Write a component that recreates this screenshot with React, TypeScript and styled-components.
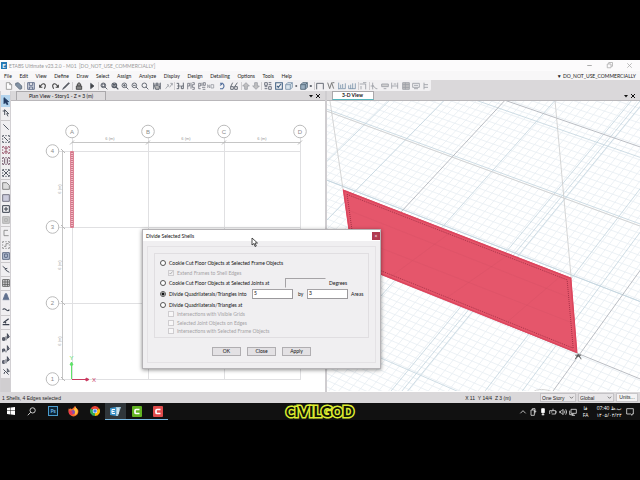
import React from 'react';
import styled, { createGlobalStyle } from 'styled-components';

const GlobalStyle = createGlobalStyle`
  * { box-sizing: border-box; }
  body { margin: 0; background: #000; font-family: Lato, "Open Sans", sans-serif; font-size: 5px; line-height: 8px; color: #222; }
  button, input, select { font: inherit; color: inherit; margin: 0; padding: 0; border: 0; background: none; border-radius: 0; }
  svg { display: block; }
`;

const Screen = styled.div`
  display: flex;
  flex-direction: column;
  min-height: 100vh;
  padding: 60px 0;
`;
const AppWindow = styled.main`
  position: relative;
  flex: 1;
  display: flex;
  flex-direction: column;
  background: #dad8da;
`;
const TitleBar = styled.header`
  display: flex;
  align-items: center;
  height: 11px;
  padding-left: 1px;
  gap: 2px;
  background: #fcfbfc;
  color: #999;
`;
const Logo = styled.span`
  width: 6px;
  height: 7px;
  background: #2779b4;
  color: #fff;
  font-weight: 700;
  font-size: 6px;
  line-height: 7px;
  text-align: center;
`;
const WindowButtons = styled.div`
  display: flex;
  gap: 11px;
  margin-left: auto;
  padding-right: 6px;
`;
const WindowButton = styled.button`
  width: 9px;
  height: 9px;
  color: #999;
`;
const MenuBar = styled.nav`
  display: flex;
  align-items: center;
  justify-content: space-between;
  height: 9px;
  padding: 0 4px;
  background: #f8f7f8;
`;
const MenuGroup = styled.div`
  display: flex;
  justify-content: space-between;
  width: 288px;
`;
const MenuItem = styled.button`
  white-space: nowrap;
`;
const ToolBar = styled.div`
  display: flex;
  align-items: center;
  align-self: flex-start;
  height: 11px;
  width: 431px;
  padding-left: 4px;
  background: #f1f0f2;
  border-radius: 0 0 2px 0;
`;
const ToolButton = styled.button<{ $w: number; $faint?: boolean }>`
  display: flex;
  justify-content: center;
  flex: none;
  width: ${p => p.$w}px;
  opacity: ${p => (p.$faint ? 0.45 : 0.85)};
`;
const ToolRule = styled.span`
  width: 1px;
  height: 8px;
  background: #cfcdd0;
`;
const Work = styled.div`
  flex: 1;
  display: flex;
  min-height: 0;
`;
const SideBar = styled.div`
  display: flex;
  flex-direction: column;
  align-items: center;
  width: 11px;
  padding-top: 4px;
  background: linear-gradient(#f0eff1 287px, #d0ced0 287px);
  border-right: 1px solid #d2d0d3;
  border-left: 1px solid #d2d0d3;
`;
const SideButton = styled.button<{ $h: number; $active?: boolean }>`
  display: flex;
  align-items: center;
  justify-content: center;
  flex: none;
  width: 9px;
  height: ${p => p.$h}px;
  background: ${p => (p.$active ? '#b3d4ee' : 'transparent')};
`;
const Panel = styled.section`
  display: flex;
  flex-direction: column;
  flex: 1 1 0;
  min-width: 0;
  &:last-child { border-left: 2px solid #cfcdd0; }
`;
const TabRow = styled.div`
  display: flex;
  align-items: flex-end;
  height: 10px;
  padding: 0 4px 0 5px;
  border-bottom: 1px solid #b9b7ba;
`;
const Tab = styled.button<{ $active?: boolean }>`
  height: 9px;
  width: ${p => (p.$active ? 42 : 90)}px;
  font-weight: ${p => (p.$active ? 700 : 400)};
  background: ${p => (p.$active ? '#fff' : '#dddbdd')};
  border: 1px solid #aaa8ab;
  border-bottom: ${p => (p.$active ? '1px solid #55b5bd' : '0')};
  line-height: 7px;
  color: #111;
`;
const TabTools = styled.button`
  margin-left: auto;
  height: 9px;
`;
const Canvas = styled.div`
  flex: 1;
  min-height: 0;
  background: #fff;
  svg { width: 100%; height: 290px; }
`;
const StatusBar = styled.footer`
  display: flex;
  align-items: center;
  height: 11px;
  padding: 0 2px;
  gap: 2px;
  background: #dad8da;
  font-family: "Liberation Sans", sans-serif;
  white-space: nowrap;
`;
const Coordinates = styled.span`
  margin-left: auto;
  margin-right: 27px;
`;
const StatusSelect = styled.select`
  width: 36px;
  height: 9px;
  padding-left: 1px;
  border: 1px solid #c4c2c5;
  background-color: #e7e5e7;
  appearance: none;
  background-image: url("data:image/svg+xml,%3Csvg xmlns='http://www.w3.org/2000/svg' viewBox='0 0 6 6'%3E%3Cpath d='M1 2l2 2 2-2' fill='none' stroke='%23666'/%3E%3C/svg%3E");
  background-size: 5px 5px;
  background-position: right 1px center;
  background-repeat: no-repeat;
`;
const UnitsButton = styled.button`
  width: 22px;
  height: 9px;
  line-height: 7px;
  background: #f4f3f4;
  border: 1px solid #c8c6c9;
`;
const TaskBar = styled.div`
  position: relative;
  display: flex;
  align-items: center;
  height: 17px;
  background: #111;
  color: #ddd;
`;
const TaskButton = styled.button<{ $active?: boolean; $running?: boolean }>`
  display: flex;
  align-items: center;
  justify-content: center;
  width: 21px;
  height: 17px;
  background: ${p => (p.$active ? '#30363a' : 'transparent')};
  border-bottom: 1px solid ${p => (p.$running ? '#78b8e0' : 'transparent')};
`;
const Tray = styled.div`
  display: flex;
  align-items: center;
  margin-left: auto;
  padding-right: 6px;
  gap: 2px;
`;
const TrayText = styled.div<{ $w: number }>`
  display: flex;
  flex-direction: column;
  align-items: center;
  width: ${p => p.$w}px;
  font-family: "Open Sans", "DejaVu Sans", sans-serif;
  font-size: 5px;
  line-height: 7px;
  white-space: nowrap;
  color: #fff;
`;
const Caption = styled.div`
  position: absolute;
  inset: 0;
  display: flex;
  align-items: center;
  justify-content: center;
  pointer-events: none;
  font-family: Lato, sans-serif;
  font-weight: 900;
  font-size: 15px;
  line-height: 16px;
  color: #101505;
  -webkit-text-stroke: 3px #dcec30;
  paint-order: stroke fill;
`;
const Small = styled.span`
  font-size: 13px;
`;

const Dialog = styled.form`
  position: absolute;
  left: 142px;
  top: 169px;
  width: 239px;
  height: 140px;
  display: flex;
  flex-direction: column;
  background: #f0eff1;
  border: 1px solid #b5b3b6;
  box-shadow: 0 1px 4px rgba(0, 0, 0, 0.45);
  color: #111;
`;
const DialogTitle = styled.div`
  display: flex;
  justify-content: space-between;
  align-items: center;
  height: 12px;
  padding-left: 3px;
  background: #fff;
`;
const CloseButton = styled.button`
  width: 8px;
  height: 8px;
  line-height: 8px;
  background: #b13a50;
  color: #fff;
`;
const Outer = styled.div`
  flex: 1;
  margin: 5px 4px;
  padding: 6px 6px;
  border: 1px solid #e4e2e5;
`;
const Options = styled.fieldset`
  margin: 0;
  height: 85px;
  padding: 4px 0 0 5px;
  border: 1px solid #e0dee1;
`;
const OptionRow = styled.div<{ $h: number; $sub?: boolean }>`
  display: flex;
  align-items: center;
  height: ${p => p.$h}px;
  padding-left: ${p => (p.$sub ? 8 : 0)}px;
  color: ${p => (p.$sub ? '#a5a3a6' : '#111')};
  white-space: nowrap;
`;
const Choice = styled.label<{ $w?: number }>`
  display: flex;
  align-items: center;
  gap: 3px;
  width: ${p => (p.$w ? `${p.$w}px` : 'auto')};
`;
const Radio = styled.input`
  appearance: none;
  width: 6px;
  height: 6px;
  border: 1px solid #555;
  border-radius: 50%;
  background: #fff;
  &:checked { background: radial-gradient(#111 1px, #fff 2px); }
`;
const Check = styled.input`
  appearance: none;
  width: 6px;
  height: 6px;
  border: 1px solid #cfcdd0;
  background: #f8f7f8;
  &:checked {
    background: url("data:image/svg+xml,%3Csvg xmlns='http://www.w3.org/2000/svg' viewBox='0 0 4 4'%3E%3Cpath d='M.5 2l1 1 2-2.500' fill='none' stroke='%23999' stroke-width='.7'/%3E%3C/svg%3E");
  }
`;
const Field = styled.input<{ $off?: boolean }>`
  width: 41px;
  height: 10px;
  padding: 0 1px 2px;
  border: 1px solid ${p => (p.$off ? 'transparent' : '#9a989b')};
  border-top-color: #a5a3a6;
  border-left-color: #a5a3a6;
  background: ${p => (p.$off ? '#f0eff1' : '#fff')};
`;
const Unit = styled.label<{ $w?: number }>`
  margin-left: ${p => (p.$w ? 5 : 3)}px;
  width: ${p => (p.$w ? `${p.$w}px` : 'auto')};
`;
const Actions = styled.div`
  display: flex;
  justify-content: center;
  gap: 6px;
  padding-top: 9px;
`;
const ActionButton = styled.button`
  width: 29px;
  height: 9px;
  line-height: 7px;
  border: 1px solid #b0aeb1;
  background: #e3e1e4;
`;
const Pointer = styled.svg`
  position: absolute;
  left: 251px;
  top: 177px;
  width: 7px;
  height: 10px;
`;

type IconProps = { d: string; fill?: string; color?: string; size?: number; width?: number };
const Icon = ({ d, fill = 'none', color = '#39404d', size = 9, width = 1.3 }: IconProps) => (
  <svg width={size} height={size} viewBox="0 0 12 12">
    <path d={d} fill={fill} stroke={color} strokeWidth={width} />
  </svg>
);

const lens = 'M8.5 5a3.5 3.5 0 1 1-7 0a3.5 3.5 0 0 1 7 0M7.5 7.5L11 11';
type Tool = { n: string; w: number; d?: string; fill?: string; color?: string; faint?: boolean; width?: number };
const tools: Tool[] = [
  { n: 'New', w: 10, d: 'M2 1h5l3 3v7H2zM7 1v3h3', fill: '#fff', color: '#888' },
  { n: 'Open', w: 10, d: 'M1 2l4-1 5 5v4L7 11 1 5z', fill: '#6e8196', color: '#46566a' },
  { n: '|', w: 1 },
  { n: 'Save', w: 13, d: 'M1 1h10v10H1zM3.5 1v4h5V1M3.5 11V7.500h5V11', fill: '#d5d9e3', color: '#3c4d70' },
  { n: 'Undo', w: 12, d: 'M1 4v4h4M1.500 7.500Q5 1 8 3T8 10', color: '#222', width: 1.6 },
  { n: 'Redo', w: 11, d: 'M11 4v4H7M10.500 7.500Q7 1 4 3T4 10', color: '#222', width: 1.6 },
  { n: 'Edit', w: 12, d: 'M1 11L3 8l7-7 1 1-7 7z', fill: '#333' },
  { n: '|', w: 1 },
  { n: 'Lock', w: 13, d: 'M2 6h8v5H2zM3.500 6V3q2.500-4 5 0v3', fill: '#777', color: '#222' },
  { n: 'Run', w: 13, d: 'M4 2l5 4-5 4z', fill: '#222' },
  { n: '|', w: 1 },
  { n: 'Zoom window', w: 11, d: lens + 'M3 3h4v4H3z' },
  { n: 'Zoom full', w: 10, d: lens + 'M3 4h4M3 6h4', width: 1.7 },
  { n: 'Zoom in', w: 10, d: lens + 'M3 5h4M5 3v4' },
  { n: 'Zoom out', w: 10, d: lens + 'M3 5h4' },
  { n: 'Zoom previous', w: 10, d: lens },
  { n: 'Pan', w: 14, d: 'M3 6V2M5 6V1M7 6V1M9 7V2M2 5l2 6h5l1-5M1 1v10M11 1v10', fill: '#aaa' },
  { n: 'Refresh', w: 10, d: 'M1 10l4-5M3 4h2v3M7 8l4-6M8 2h3v3', faint: true },
  { n: '|', w: 1 },
  { n: '3-D', w: 12, d: 'M1 2h3v4H2M4 6v4H1M5 6h2M11 1v9H8V6h3' },
  { n: 'Plan', w: 11, d: 'M1 11V2h3v4H1M6 1v9M8 1h3v3H8v4h3v3H8', width: 1 },
  { n: 'Elevation', w: 10, d: 'M1 6h3V2H1v8h3M6 1v5M8 1h3v4H8zM6 8h5M7 11h4', width: 1 },
  { n: 'Named view', w: 9, d: 'M1 9V4l3 5V4M6 4h4v5H6z', faint: true },
  { n: 'Rotate', w: 12, d: 'M3 2h4q4 4 0 8H3M3 5l3-2', color: '#35578d', width: 1.6 },
  { n: 'Perspective', w: 13, d: 'M1 7L4 1M7 7l4-6M1 7h4v4H1zM7 7h4v4H7z' },
  { n: '|', w: 1 },
  { n: 'Up', w: 10, d: 'M6 1L1 6h3v5h4V6h3z', fill: '#888', faint: true },
  { n: 'Down', w: 10, d: 'M6 11L1 6h3V1h4v5h3z', fill: '#888', faint: true },
  { n: '|', w: 1 },
  { n: 'Options', w: 13, d: 'M1 1h4v4H1zM7 1h4M7 4h4M1 7h4M1 10h4M7 7h4v4H7z', color: '#454b5c' },
  { n: 'Set display', w: 10, d: 'M1 1h10v10H1zM3 6l2 2 4-5', color: '#274b72', width: 1.6 },
  { n: 'Object view', w: 10, d: 'M1 4h7v7H1zM1 4l3-3h7v7l-3 3M8 4l3-3', color: '#6c87a1', fill: '#d7e2ea' },
  { n: 'View options', w: 5, d: 'M4 5h3v2H4z', fill: '#222' },
  { n: 'Shade', w: 9, d: 'M1 4h7v7H1zM1 4l3-3h7v7l-3 3M8 4l3-3', fill: '#8ba3b8', color: '#385064' },
  { n: 'Shade options', w: 6, d: 'M4 5h3v2H4z', fill: '#222' },
  { n: '|', w: 1 },
  { n: 'Frame', w: 11, d: 'M1 11V2h10v9' },
  { n: 'Deformed', w: 11, d: 'M1 1l3 9 3-9 3 9M8 1h3', color: '#555' },
  { n: 'Forces', w: 10, d: 'M1 11V1M1 10h10V2M4 4v5M7 3v6', color: '#44688b', width: 1 },
  { n: 'Diagram', w: 11, d: 'M1 5v5h10V2M4 4v6M7 2v8', color: '#44688b', width: 1 },
  { n: '|', w: 1 },
  { n: 'Table', w: 11, d: 'M1 3h9v8M3 6v5M6 1h5', faint: true },
  { n: '|', w: 1 },
  { n: 'Section', w: 11, d: 'M4 1v10M4 5l5 5h2M1 6h5', faint: true },
  { n: 'Beam', w: 10, d: 'M1 3h10v4H1zM4 10h4', faint: true, fill: '#aaa' },
  { n: 'Column', w: 11, d: 'M1 1v9M1 6h9M10 1v9M4 3h4', faint: true },
  { n: 'Wall', w: 10, d: 'M1 1h10v10H1zM1 4h10M1 8h10M5 1v10', faint: true, fill: '#888' },
  { n: 'Slab', w: 10, d: 'M1 2h10v6H1zM3 10h6M3 5h6', faint: true },
  { n: 'Joint', w: 10, d: 'M3 1v10M3 4h6M3 8h6', faint: true },
];

const square = 'M1 1h2M5 1h2M9 1h2v2M11 5v2M11 9v2H9M7 11H5M3 11H1V9M1 7V5M1 3V1';
const sideTools: Tool[] = [
  { n: 'Select', w: 12, d: 'M3 1l7 6H7l2 4H7L5 8 3 10z', fill: '#223b62', color: '#223b62' },
  { n: 'Reshape', w: 12, d: 'M1 3h4M4 1l6 6H7l2 4M4 1v8' },
  { n: '—', w: 2 },
  { n: 'Draw line', w: 12, d: 'M2 2l8 8' },
  { n: 'Draw beam', w: 11, d: square + 'M3 3l6 6' },
  { n: 'Draw column', w: 11, d: square + 'M3 3h6M6 3v6M3 9h6', color: '#8a3a55' },
  { n: 'Secondary beams', w: 12, d: square + 'M4 2v8M8 2v8', color: '#5b3b52', fill: '#ddc6d0' },
  { n: 'Draw brace', w: 11, d: square + 'M2 2l8 8M10 2l-8 8' },
  { n: '—', w: 2 },
  { n: 'Draw area', w: 12, d: 'M1 11V1h6l4 4v6z', fill: '#ddd', color: '#777' },
  { n: 'Draw rectangle', w: 11, d: 'M1 1h10v10H1z', fill: '#ccd', color: '#667' },
  { n: 'Quick area', w: 11, d: 'M1 1h10v10H1zM3 6h6M6 3v6', width: 1.5 },
  { n: 'Quick opening', w: 11, d: 'M1 1h10v10H1zM4 4h4v4H4z', color: '#aaa', fill: '#ccc' },
  { n: '—', w: 2 },
  { n: 'Draw wall', w: 12, d: 'M9 2H3v8h7', color: '#888' },
  { n: 'Quick wall', w: 11, d: square + 'M3 8h3V4h4', color: '#888' },
  { n: 'Wall opening', w: 11, d: 'M1 1h10v10H1zM4 3h4v5H4z', fill: '#bcc6d9', color: '#4d5c77' },
  { n: '—', w: 2 },
  { n: 'Draw link', w: 12, d: 'M1 2l4 3 1 3 5 3M4 6l4-1' },
  { n: '—', w: 2 },
  { n: 'Draw grid', w: 12, d: 'M1 1h10v10H1zM1 4.500h10M1 8h10M4.500 1v10M8 1v10', color: '#555' },
  { n: '—', w: 2 },
  { n: 'Tendons', w: 12, d: 'M5 1h2l3 8H2zM1 10h10', fill: '#60718e', color: '#60718e' },
  { n: 'Strips', w: 11, d: 'M1 7q2-3 5 0t5 0', width: 1.6 },
  { n: '—', w: 2 },
  { n: 'Dimension', w: 12, d: 'M2 7l8-6M1 10h10M4 5l2 3', width: 1.8 },
  { n: '—', w: 3 },
  { n: 'Select all', w: 12, d: 'M1 7h3v4H1zM6 5v6M8 1v7l3-2z', fill: '#667' },
  { n: 'Previous selection', w: 11, d: 'M1 11V6h3v3H1M8 1v7l3-2zM6 8v3', fill: '#889' },
  { n: 'Clear selection', w: 12, d: 'M4 7H1v4h3M6 5v6M8 1v7l3-2z', fill: '#778' },
  { n: 'Intersecting', w: 11, d: 'M2 2l8 8M3 9l1-3M8 1v5l3-1z' },
];

const menus = ['File', 'Edit', 'View', 'Define', 'Draw', 'Select', 'Assign', 'Analyze', 'Display', 'Design', 'Detailing', 'Options', 'Tools', 'Help'];

const PlanDrawing = () => (
  <svg viewBox="11 101 315 290" preserveAspectRatio="xMinYMin slice" fontFamily="Liberation Sans, sans-serif">
    <g fill="none" stroke="#e0e0e2" shapeRendering="crispEdges">
      {[72, 148, 224, 300].map(x => <path key={x} d={`M${x}.5 137V380`} />)}
      {[151, 227, 303, 379].map(y => <path key={y} d={`M59 ${y}.5H301`} />)}
    </g>
    <g fill="none" stroke="#b8b8b8">
      <path d="M72 142.500H300M62.500 151V380" stroke="#c6c6c6" />
      {[72, 148, 224, 300].map(x => <path key={x} d={`M${x - 2} 144.500l4-4`} />)}
      {[151, 227, 303, 379].map(y => <path key={y} d={`M61 ${y - 2}l4 4`} />)}
    </g>
    <g fill="#fff" stroke="#bcbcbc" strokeWidth="1">
      {[72, 148, 224, 300].map(x => <circle key={x} cx={x} cy="131.500" r="6.300" />)}
      {[151, 227, 303, 379].map(y => <circle key={y} cx="52.500" cy={y} r="6.300" />)}
    </g>
    <g fill="#8c8c8c" fontSize="6" textAnchor="middle">
      {['A', 'B', 'C', 'D'].map((t, i) => <text key={t} x={72 + i * 76} y="133.500">{t}</text>)}
      {['4', '3', '2', '1'].map((t, i) => <text key={t} x="52.500" y={153 + i * 76}>{t}</text>)}
    </g>
    <g fill="#999" fontSize="4" textAnchor="middle">
      {[110, 186, 262].map(x => <text key={x} x={x} y="140">6 (m)</text>)}
      {[189, 265, 341].map(y => <text key={y} transform={`translate(61 ${y}) rotate(-90)`}>6 (m)</text>)}
    </g>
    <path d="M70.500 151.500h3v76h-3z" fill="#f3b6c2" stroke="#df8496" strokeWidth="1" />
    <path d="M72 152V227" stroke="#a33a50" strokeDasharray="1 1" />
    <path d="M71.500 379V364M70 365l1.500-3 1.500 3z" stroke="#5fe268" fill="#5fe268" />
    <path d="M72 379.500H87M86 378l3 1.500-3 1.500z" stroke="#c9395f" fill="#c9395f" />
    <text x="69.500" y="360" fontSize="6" fill="#4fdc5a">Y</text>
    <text x="92" y="382" fontSize="6" fill="#c9395f">X</text>
  </svg>
);

const toEast = { x: 1650, y: -1130 };
const toWest = { x: -3000, y: -1110 };
const fromEast = (x: number, y: number) => {
  const slope = (y - toEast.y) / (x - toEast.x);
  return `M700 ${y + slope * (700 - x)}L100 ${y + slope * (100 - x)}`;
};
const fromWest = (x: number, y: number) => {
  const slope = (y - toWest.y) / (x - toWest.x);
  return `M300 ${y + slope * (300 - x)}L700 ${y + slope * (700 - x)}`;
};
const range = (n: number) => Array.from({ length: n }, (_, i) => i);

const SpaceDrawing = () => (
  <svg viewBox="328 101 312 290" preserveAspectRatio="xMinYMin slice">
    <g fill="none" stroke="#e7edf2" strokeWidth="0.800">
      <path d={range(70).map(i => fromEast(190 + i * 9, 250)).join('')} />
      <path d={range(66).map(i => fromWest(480, 20 + i * 7)).join('')} />
    </g>
    <g fill="none" stroke="#c3d4de" strokeWidth="0.800">
      <path d={[[327, 162], [346, 201], [493, 170], [550, 210], [555, 210], [577, 270], [480, 283], [600, 285]].map(([x, y]) => fromEast(x, y)).join('')} />
      <path d={[[513, 113], [453, 155], [344, 186], [571, 274], [382, 357]].map(([x, y]) => fromWest(x, y)).join('')} />
    </g>
    <g fill="none" stroke="#b2b6bd" strokeWidth="0.900">
      <path d={[[403, 210], [578, 355]].map(([x, y]) => fromEast(x, y)).join('')} />
      <path d={[[513, 103], [577, 352]].map(([x, y]) => fromWest(x, y)).join('')} />
    </g>
    <g fill="none" stroke="#ccc" strokeWidth="0.800">
      <path d={fromWest(453, 157)} />
      <path d="M331 101L344 189M555 101L571 277" />
      <path d="M532 391Q540 385 554 391" />
    </g>
    <path d="M344 189L571 277 577 352 354 263z" fill="#e5566b" />
    <g stroke="#cf4e63" strokeWidth="0.600" opacity="0.500">
      <path d="M390 277L452 231M444 299L510 253M505 323L562 274M350 235L575 323M350 210L573 298" fill="none" />
    </g>
    <path d="M344.500 190L570.500 277.500 576.500 351 355 262.500z" fill="none" stroke="#dc455d" strokeWidth="1.500" />
    <path d="M348 194L567 279 573 347 357 260z" fill="none" stroke="#8f2439" strokeWidth="0.700" strokeDasharray="1 1" />
    <path d="M578 353l-3 5M578 353l3 5M575 354h6M576 356q2-2 4 0" fill="none" stroke="#444" strokeWidth="0.800" />
  </svg>
);

const PanelTools = () => (
  <TabTools type="button" aria-label="Close view">
    <svg width="12" height="8" viewBox="0 0 12 8">
      <path d="M0 3h4L2 5.500z" fill="#111" />
      <path d="M7 2l4 4M11 2L7 6" stroke="#111" />
    </svg>
  </TabTools>
);

const Camtasia = ({ color }: { color: string }) => (
  <svg width="10" height="11" viewBox="0 0 10 11">
    <rect width="10" height="11" rx="1" fill={color} />
    <path d="M7.500 3.500H4q-1 0-1 1v2q0 1 1 1h3.500" fill="none" stroke="#fff" strokeWidth="1.700" />
  </svg>
);

const TrayIcon = ({ d }: { d: string }) => <Icon d={d} color="#e5e5e5" size={8} width={1.2} />;

export default function App() {
  return (
    <Screen>
      <GlobalStyle />
      <AppWindow>
        <TitleBar>
          <Logo>E</Logo>
          <span>ETABS Ultimate v23.2.0 - M01&nbsp; [DO_NOT_USE_COMMERCIALLY]</span>
          <WindowButtons>
            <WindowButton aria-label="Minimize"><Icon d="M3 6h6" color="#aaa" /></WindowButton>
            <WindowButton aria-label="Restore"><Icon d="M3 4h5v5H3zM5 4V2h5v5H8" color="#aaa" width={1} /></WindowButton>
            <WindowButton aria-label="Close"><Icon d="M3 3l6 6M9 3L3 9" color="#aaa" width={1} /></WindowButton>
          </WindowButtons>
        </TitleBar>
        <MenuBar>
          <MenuGroup>{menus.map(m => <MenuItem key={m} type="button">{m}</MenuItem>)}</MenuGroup>
          <MenuItem type="button">▼ DO_NOT_USE_COMMERCIALLY</MenuItem>
        </MenuBar>
        <ToolBar role="toolbar">
          {tools.map((t, i) => t.d
            ? <ToolButton key={i} type="button" aria-label={t.n} $w={t.w} $faint={t.faint}><Icon d={t.d} fill={t.fill} color={t.color} width={t.width} size={8} /></ToolButton>
            : <ToolRule key={i} />)}
        </ToolBar>
        <Work>
          <SideBar role="toolbar">
            {sideTools.map((t, i) => t.d
              ? (
                <SideButton key={i} type="button" aria-label={t.n} $h={t.w} $active={i === 0}>
                  <Icon d={t.d} fill={t.fill} color={t.color} width={t.width} size={8} />
                </SideButton>
              )
              : <SideButton as="span" key={i} $h={t.w}><Icon d="M0 6h12" color="#c8c6c9" size={9} /></SideButton>)}
          </SideBar>
          <Panel>
            <TabRow>
              <Tab type="button">Plan View - Story1 - Z = 3 (m)</Tab>
              <PanelTools />
            </TabRow>
            <Canvas><PlanDrawing /></Canvas>
          </Panel>
          <Panel>
            <TabRow>
              <Tab type="button" $active>3-D View</Tab>
              <PanelTools />
            </TabRow>
            <Canvas><SpaceDrawing /></Canvas>
          </Panel>
        </Work>
        <StatusBar>
          <span>1 Shells, 4 Edges selected</span>
          <Coordinates>X 11&nbsp; Y 14/4&nbsp; Z 3 (m)</Coordinates>
          <StatusSelect aria-label="Story"><option>One Story</option></StatusSelect>
          <StatusSelect aria-label="Coordinate system"><option>Global</option></StatusSelect>
          <UnitsButton type="button">Units...</UnitsButton>
        </StatusBar>
        <TaskBar>
          <TaskButton aria-label="Start">
            <svg width="8" height="8" viewBox="0 0 8 8"><path d="M0 1l3.500-.5v3H0zM4 .5L8 0v3.500H4zM0 4h3.500v3.500L0 7zM4 4h4v4l-4-.5z" fill="#fff" /></svg>
          </TaskButton>
          <TaskButton aria-label="Search"><Icon d="M11 4.500a3.500 3.500 0 1 1-7 0a3.500 3.500 0 0 1 7 0M5 7L1 11" color="#ddd" size={9} width={1.2} /></TaskButton>
          <TaskButton aria-label="Photoshop">
            <svg width="10" height="10" viewBox="0 0 10 10">
              <rect x=".5" y=".5" width="9" height="9" fill="#0b2538" stroke="#4b9ccc" />
              <text x="5" y="7" fontSize="5" fontWeight="700" textAnchor="middle" fill="#70bce8">Ps</text>
            </svg>
          </TaskButton>
          <TaskButton aria-label="Firefox">
            <svg width="11" height="11" viewBox="0 0 12 12">
              <path d="M6 2Q7 0 8 0q0 2 3 4 1 3-1 5.500-4 4-8 0-2.500-3-1-7l1 1 1-1 1 1z" fill="#f46a32" />
              <path d="M8 1q4 4 2 7-1 2-3 2 2-3-1-5z" fill="#ffc33d" />
              <circle cx="5.500" cy="6.500" r="2.200" fill="#7953ba" />
              <path d="M1 5q2 0 3 1l2 0-2 2 2 1q-3 2-5-1z" fill="#ee3552" />
            </svg>
          </TaskButton>
          <TaskButton aria-label="Chrome">
            <svg width="10" height="10" viewBox="0 0 12 12">
              <path d="M6 6L.8 3A6 6 0 0 1 11.200 3z" fill="#e94335" />
              <path d="M6 6L11.200 3A6 6 0 0 1 6 12z" fill="#fbbc05" />
              <path d="M6 6V12A6 6 0 0 1 .8 3z" fill="#34a853" />
              <circle cx="6" cy="6" r="2.800" fill="#fff" />
              <circle cx="6" cy="6" r="2.100" fill="#4285f4" />
            </svg>
          </TaskButton>
          <TaskButton aria-label="ETABS" $active $running>
            <svg width="11" height="11" viewBox="0 0 11 11">
              <path d="M0 2l6-1v9L0 9z" fill="#3a91c8" />
              <path d="M6 1h5L8 10H6z" fill="#9fc6d9" />
              <path d="M5 3.500H2v4h3M2 5.500h2.500M8 2v6" stroke="#fff" fill="none" />
            </svg>
          </TaskButton>
          <TaskButton aria-label="Camtasia" $running><Camtasia color="#62b322" /></TaskButton>
          <TaskButton aria-label="Camtasia Recorder" $running><Camtasia color="#e04c4c" /></TaskButton>
          <Tray>
            <TrayIcon d="M2 8l4-4 4 4" />
            <TrayIcon d="M3 3h5v8H3zM5 3V1h4v7M8 5h3" />
            <Icon d="M4 1h4v6H4zM6 7v4M4 10h4" fill="#fff" color="#fff" size={8} />
            <TrayIcon d="M1 4h9v5H4M1 4v5M6 1v3M3 6h2M10 6h2" />
            <TrayIcon d="M1 5h2l3-3v8L3 7H1zM8 4q2 2 0 4M10 2q3 4 0 8" />
            <TrayIcon d="M3 2h8v6H3zM1 4v6h5M6 8v3M4 11h5" />
            <TrayText $w={13}><span>فا</span><span>FA</span></TrayText>
            <TrayText $w={30}><span dir="ltr">07:40 ب.ظ</span><span>۱۴۰۵/۰۴/۲۴</span></TrayText>
            <TrayIcon d="M1 1h10v8H9v2L7 9H1z" />
          </Tray>
          <Caption><span><Small>CI</Small>VILG<Small>O</Small>D</span></Caption>
        </TaskBar>
        <Dialog onSubmit={e => e.preventDefault()} role="dialog" aria-label="Divide Selected Shells">
          <DialogTitle>
            <span>Divide Selected Shells</span>
            <CloseButton type="button" aria-label="Close dialog">×</CloseButton>
          </DialogTitle>
          <Outer>
            <Options>
              <OptionRow $h={10}>
                <Choice><Radio type="radio" name="mode" />Cookie Cut Floor Objects at Selected Frame Objects</Choice>
              </OptionRow>
              <OptionRow $h={9} $sub><Choice><Check type="checkbox" defaultChecked disabled />Extend Frames to Shell Edges</Choice></OptionRow>
              <OptionRow $h={12}>
                <Choice $w={125}><Radio type="radio" name="mode" />Cookie Cut Floor Objects at Selected Joints at</Choice>
                <Field id="degrees" $off disabled /><Unit htmlFor="degrees">Degrees</Unit>
              </OptionRow>
              <OptionRow $h={10}>
                <Choice $w={92}><Radio type="radio" name="mode" defaultChecked />Divide Quadrilaterals/Triangles into</Choice>
                <Field aria-label="First direction" defaultValue="5" />
                <Unit htmlFor="areas" $w={9}>by</Unit>
                <Field id="areas" defaultValue="3" />
                <Unit htmlFor="areas">Areas</Unit>
              </OptionRow>
              <OptionRow $h={11}><Choice><Radio type="radio" name="mode" />Divide Quadrilaterals/Triangles at</Choice></OptionRow>
              <OptionRow $h={8} $sub><Choice><Check type="checkbox" disabled />Intersections with Visible Grids</Choice></OptionRow>
              <OptionRow $h={9} $sub><Choice><Check type="checkbox" disabled />Selected Joint Objects on Edges</Choice></OptionRow>
              <OptionRow $h={8} $sub><Choice><Check type="checkbox" disabled />Intersections with Selected Frame Objects</Choice></OptionRow>
            </Options>
            <Actions>
              <ActionButton type="submit">OK</ActionButton>
              <ActionButton type="button">Close</ActionButton>
              <ActionButton type="button">Apply</ActionButton>
            </Actions>
          </Outer>
        </Dialog>
        <Pointer viewBox="0 0 7 10"><path d="M1 1v7l2-1.500 1 3 1.300-.5-1.300-3h2.500z" fill="#fff" stroke="#222" strokeWidth="0.800" /></Pointer>
      </AppWindow>
    </Screen>
  );
}
